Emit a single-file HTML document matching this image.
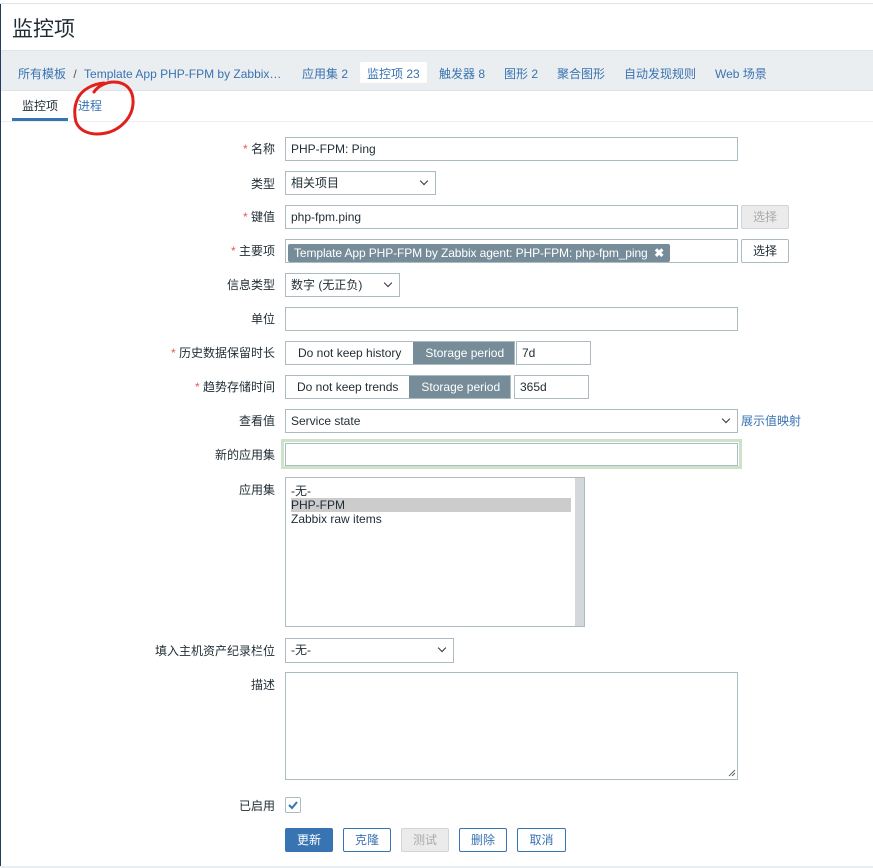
<!DOCTYPE html>
<html><head><meta charset="utf-8"><style>
*{box-sizing:border-box;margin:0;padding:0}
body{width:873px;height:868px;overflow:hidden;background:#fff;font-family:"Liberation Sans","Noto Sans CJK SC",sans-serif;font-size:12px;color:#1f2c33;position:relative}
.a{position:absolute}
.lbl{position:absolute;right:598px;text-align:right;white-space:nowrap;font-size:12px;color:#1f2c33}
.lbl i{color:#e45959;font-style:normal}
.in{position:absolute;border:1px solid #acbbc2;background:#fff;padding:0 5px;line-height:22px;font-size:12px;white-space:nowrap;overflow:hidden}
.sel:after{content:"";position:absolute;right:8px;top:6px;width:5px;height:5px;border-right:1px solid #333;border-bottom:1px solid #333;transform:rotate(45deg)}
.btn{position:absolute;height:24px;line-height:22px;text-align:center;border:1px solid #3873b2;color:#3873b2;background:#fff;border-radius:2px;font-size:12px}
.nav{position:absolute;top:65px;color:#3873b2;font-size:12px;white-space:nowrap}
.seg{position:absolute;height:24px;border:1px solid #acbbc2;display:flex;font-size:12px;white-space:nowrap;overflow:hidden}
.seg span{padding:0 11px;line-height:22px;white-space:nowrap}
.seg .on{background:#768d99;color:#fff;padding:0 0 0 12px}
</style></head><body>
<div class="a" style="left:0;top:0;width:873px;height:4px;background:#fff;border-bottom:1px solid #dfe4e7"></div>
<div class="a" style="left:0;top:4px;width:1px;height:864px;background:#1f3d5c"></div>
<div class="a" style="left:12px;top:13px;font-size:21px;color:#1f2c33">监控项</div>
<div class="a" style="left:1px;top:50px;width:872px;height:41px;background:#ebeef0;border-top:1px solid #dfe4e7;border-bottom:1px solid #dfe4e7"></div>
<div class="nav" style="left:18px">所有模板 <span style="color:#555;margin:0 4px">/</span> Template App PHP-FPM by Zabbix…</div>
<div class="nav" style="left:302px">应用集 2</div>
<div class="a" style="left:360px;top:62px;width:67px;height:21px;background:#fff;border-radius:2px"></div>
<div class="nav" style="left:367px;color:#3873b2">监控项 23</div>
<div class="nav" style="left:439px">触发器 8</div>
<div class="nav" style="left:504px">图形 2</div>
<div class="nav" style="left:557px">聚合图形</div>
<div class="nav" style="left:624px">自动发现规则</div>
<div class="nav" style="left:715px">Web 场景</div>
<div class="a" style="left:22px;top:97px;font-size:12px">监控项</div>
<div class="a" style="left:78px;top:97px;font-size:12px;color:#3873b2">进程</div>
<div class="a" style="left:12px;top:118px;width:56px;height:3px;background:#3873b2"></div>
<div class="a" style="left:1px;top:121px;width:872px;height:1px;background:#ebeef0"></div>
<svg class="a" style="left:70px;top:78px" width="70" height="62"><path d="M34 5 C22 6 12 12 8 20 C4 28 4 36 6 44 C10 54 22 58 36 55 C50 52 62 40 63 26 C64 12 56 4 44 4 C36 4 28 8 24 14" fill="none" stroke="#e0201c" stroke-width="3" stroke-linecap="round"/></svg>

<div class="lbl" style="top:140px"><i>*</i> 名称</div>
<div class="in" style="left:285px;top:137px;width:453px;height:24px">PHP-FPM: Ping</div>
<div class="lbl" style="top:175px">类型</div>
<div class="in sel" style="left:285px;top:171px;width:151px;height:24px">相关项目</div>
<div class="lbl" style="top:208px"><i>*</i> 键值</div>
<div class="in" style="left:285px;top:205px;width:453px;height:24px">php-fpm.ping</div>
<div class="btn" style="left:741px;top:205px;width:48px;border-color:#cfd6d9;color:#aaa;background:#ebebeb">选择</div>
<div class="lbl" style="top:242px"><i>*</i> 主要项</div>
<div class="in" style="left:285px;top:239px;width:453px;height:24px;padding:2px"><span style="display:inline-block;background:#768d99;color:#fff;line-height:18px;padding:0 6px;border-radius:2px;letter-spacing:-0.1px">Template App PHP-FPM by Zabbix agent: PHP-FPM: php-fpm_ping&nbsp; <b>✖</b></span></div>
<div class="btn" style="left:741px;top:239px;width:48px;border-color:#acbbc2;color:#1f2c33">选择</div>
<div class="lbl" style="top:276px">信息类型</div>
<div class="in sel" style="left:285px;top:273px;width:115px;height:24px">数字 (无正负)</div>
<div class="lbl" style="top:310px">单位</div>
<div class="in" style="left:285px;top:307px;width:453px;height:24px"></div>
<div class="lbl" style="top:344px"><i>*</i> 历史数据保留时长</div>
<div class="seg" style="left:285px;top:341px;width:230px"><span style="padding:0 12px">Do not keep history</span><span class="on" style="flex:1">Storage period</span></div>
<div class="in" style="left:516px;top:341px;width:75px;height:24px">7d</div>
<div class="lbl" style="top:378px"><i>*</i> 趋势存储时间</div>
<div class="seg" style="left:285px;top:375px;width:226px"><span>Do not keep trends</span><span class="on" style="flex:1">Storage period</span></div>
<div class="in" style="left:514px;top:375px;width:75px;height:24px">365d</div>
<div class="lbl" style="top:412px">查看值</div>
<div class="in sel" style="left:285px;top:409px;width:453px;height:24px">Service state</div>
<div class="a" style="left:741px;top:412px;color:#3873b2">展示值映射</div>
<div class="lbl" style="top:446px">新的应用集</div>
<div class="a" style="left:281px;top:439px;width:461px;height:30px;border:3px solid #cde3c9"></div>
<div class="in" style="left:285px;top:443px;width:453px;height:23px"></div>
<div class="lbl" style="top:481px">应用集</div>
<div class="a" style="left:285px;top:477px;width:300px;height:150px;border:1px solid #acbbc2;font-size:12px;line-height:14px;padding:6px 0 0 5px">-无-<br><div style="background:#cccccc;width:280px;margin-left:0;color:#1f2c33">PHP-FPM</div>Zabbix raw items
<div class="a" style="right:0;top:0;width:9px;height:148px;background:#d3d8dc"></div></div>
<div class="lbl" style="top:642px">填入主机资产纪录栏位</div>
<div class="in sel" style="left:285px;top:638px;width:169px;height:25px">-无-</div>
<div class="lbl" style="top:676px">描述</div>
<div class="in" style="left:285px;top:672px;width:453px;height:108px"></div>
<svg class="a" style="left:728px;top:769px" width="8" height="8"><path d="M1 7 L7 1 M4 7 L7 4" stroke="#666" stroke-width="1"/></svg>
<div class="lbl" style="top:797px">已启用</div>
<div class="a" style="left:285px;top:797px;width:16px;height:16px;border:1px solid #acbbc2;border-radius:2px"><svg width="14" height="14" style="position:absolute;left:0;top:0"><path d="M3 7 L6 10 L11 4" fill="none" stroke="#3873b2" stroke-width="2"/></svg></div>
<div class="btn" style="left:285px;top:828px;width:48px;background:#3873b2;color:#fff">更新</div>
<div class="btn" style="left:343px;top:828px;width:48px">克隆</div>
<div class="btn" style="left:401px;top:828px;width:48px;border-color:#cfd6d9;color:#aaa;background:#ebebeb">测试</div>
<div class="btn" style="left:459px;top:828px;width:48px">删除</div>
<div class="btn" style="left:517px;top:828px;width:49px">取消</div>
<div class="a" style="left:0;top:866px;width:873px;height:2px;background:#ebeef0"></div>
</body></html>
